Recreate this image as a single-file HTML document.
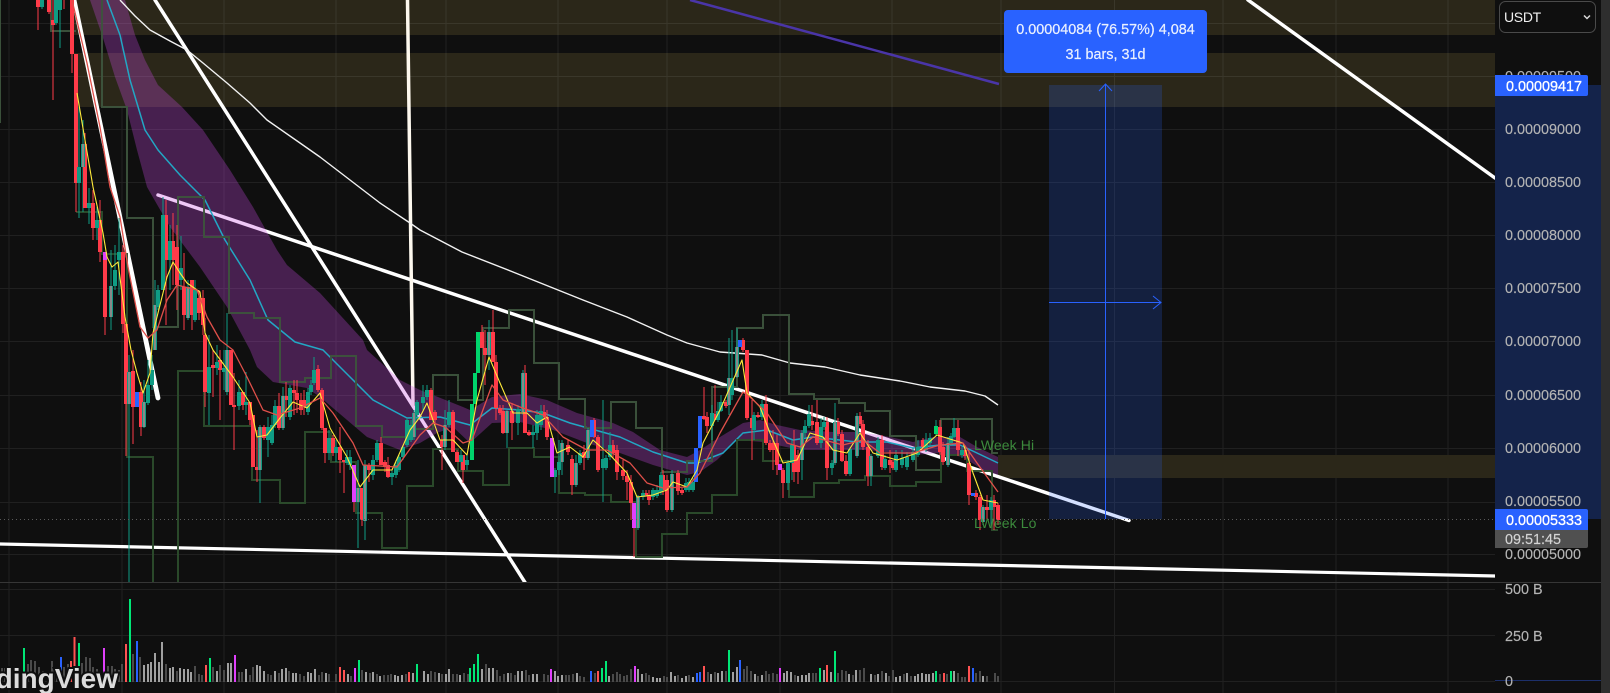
<!DOCTYPE html>
<html><head><meta charset="utf-8"><title>Chart</title>
<style>
html,body{margin:0;padding:0;background:#0f0f0f;width:1610px;height:693px;overflow:hidden}
svg{display:block;position:absolute;left:0;top:0}
text{font-family:"Liberation Sans",sans-serif}
</style></head><body>
<svg width="1610" height="693" viewBox="0 0 1610 693" xmlns="http://www.w3.org/2000/svg">
<rect width="1610" height="693" fill="#0f0f0f"/>
<rect x="1601" y="0" width="9" height="693" fill="#2e2e2e"/>
<defs><clipPath id="c"><rect x="0" y="0" width="1495" height="582"/></clipPath></defs>
<!-- grid -->
<path d="M9 0V693M122 0V693M224 0V693M336 0V693M446 0V693M558 0V693M667 0V693M780 0V693M892 0V693M1001 0V693M1114.500 0V693M1223 0V693M1336 0V693M1448 0V693" stroke="#202020" fill="none"/>
<path d="M0 23.500H1495M0 76.500H1495M0 129.500H1495M0 182.500H1495M0 235.500H1495M0 288.500H1495M0 341.500H1495M0 395.500H1495M0 448.500H1495M0 502.500H1495M0 554.500H1495M0 589.500H1495M0 635.500H1495M0 681.500H1495" stroke="#202020" fill="none"/>
<path d="M0 582.500H1601" stroke="#363636" fill="none"/>
<g clip-path="url(#c)">
<!-- zones -->
<rect x="74" y="0" width="1421" height="35" fill="#2b2719"/>
<rect x="74" y="53" width="1421" height="54" fill="#2b2719"/>
<rect x="998" y="455" width="497" height="23" fill="#2b2719"/>
<path d="M74 23.500H1495M74 76.500H1495M224 0V35M336 0V35M446 0V35M558 0V35M667 0V35M780 0V35M892 0V35M1001 0V35M1114.500 0V35M1223 0V35M1336 0V35M1448 0V35M224 53V107M336 53V107M446 53V107M558 53V107M667 53V107M780 53V107M892 53V107M1001 53V107M1114.500 53V107M1223 53V107M1336 53V107M1448 53V107" stroke="#3a372a" fill="none"/>
<!-- trend lines -->
<g stroke="#fff" fill="none" stroke-linecap="round">
<path d="M0 544L1495 576" stroke-width="3.200"/>
<path d="M158 195L1129 520.500" stroke-width="3.500"/>
<path d="M74 0L158 398" stroke-width="4.800"/>
<path d="M155 0L526 584" stroke-width="3.500"/>
<path d="M407.500 0L413 405" stroke-width="3.500" stroke="#fdf8ee"/>
<path d="M1248 0L1495 178" stroke-width="3.500"/>
</g>
<path d="M690 0L999 84" stroke="#4a35a8" stroke-width="2.500" fill="none"/>
<!-- purple band -->
<path fill="rgba(201,72,228,.3)" d="M90 0L125 0L135 35L145 60L158 85L182 107L203 130L230 170L253 207L277 250L287 265L320 293L363 340L367 350L400 380L420 390L433 395L463 407L470 410L492 397L520 394L547 400L577 413L613 423L633 432L660 450L687 457L700 450L720 437L743 423L760 420L777 425L800 430L833 432L857 432L880 435L913 442L933 437L960 437L977 447L998 457L998 475L983 470L963 457L940 453L913 455L867 450L800 450L763 442L737 440L717 460L700 472L687 475L653 465L620 453L587 443L553 430L520 422L492 423L470 443L453 427L437 433L420 443L400 450L367 437L320 397L307 388L273 382L257 367L250 350L227 307L200 267L170 227L147 187L137 150L127 110L115 77L103 38Z"/>
<!-- position rect -->
<rect x="1049" y="85" width="113" height="434" fill="rgba(41,98,255,.2)"/>
<path d="M1105.500 85V519M1049 302.500H1161M1099 91L1105.500 84L1112 91M1153 296L1161 302.500L1153 309" stroke="#2962ff" fill="none"/>
<!-- MAs -->
<path fill="none" stroke="#f2f2f2" stroke-width="1.400" stroke-linejoin="round" d="M120 0L135 16L150 30L170 41L187 50L203 63L227 83L250 103L267 120L300 143L320 157L350 180L380 203L410 223L420 230L462 252L513 272L583 300L627 317L667 335L687 343L720 352L762 355L790 363L825 367L860 375L900 381L930 387L965 391L985 396L998 405"/>
<path fill="none" stroke="#22a7c4" stroke-width="1.500" stroke-linejoin="round" d="M107 0L120 35L130 80L145 130L158 150L180 175L205 200L225 240L250 280L268 320L295 342L323 350L350 377L373 400L407 418L440 417L470 425L492 408L520 410L543 413L570 423L620 437L653 452L687 463L697 463L723 453L743 433L767 430L793 440L813 437L857 442L887 442L913 448L940 445L960 445L977 453L998 463"/>
<!-- stepped channels -->
<g fill="none" stroke="#2c4d2c" stroke-width="2" opacity=".95">
<path d="M0 0V123M51 0V31H76M102 0V107H127V218H153V327H178V197H204V237H229V313H254V318H280V382H305V378H331V356H356V426H382V437H407V429H433V375H458V400H483V328H509V310H534V363H559V399H585V428H611V402H636V428H662V472H687V461H712V387H737V328H763V315H789V394H814V399H839V403H865V411H890V436H916V470H941V419H992V453H998" stroke="#3d543d"/>
<path d="M76 212H102V254H127V457H153V582M178 582V371H204V426H252V480H280V503H305V432H331V462H356V513H382V548H407V486H433V449H458V471H483V485H509V448H534V457H559V493H585V495H611V502H636V557H662V534H687V513H712V495H737V440H763V461H789V497H814V483H839V480H865V476H890V486H916V482H941V455H967V471H992V530H998"/>
</g>
<!-- wicks -->
<path shape-rendering="crispEdges" fill="none" stroke="#ff3b49" d="M38 0V30M49 0V14M53 0V100M64 0V9M72 0V73M76 54V212M85 133V208M93 190V240M100 200V262M105 252V335M123 245V333M126 324V456M133 350V444M141 382V436M166 200V325M173 213V285M177 225V310M184 253V330M192 280V330M199 290V320M203 290V335M205 318V407M213 350V397M220 350V420M231 350V405M234 373V450M243 392V410M250 402V425M253 415V467M257 430V482M264 425V440M279 393V430M286 382V417M294 380V415M297 380V413M301 393V415M304 390V415M318 365V392M322 388V430M325 428V463M333 435V456M340 427V473M344 460V493M354 465V512M362 488V526M369 463V482M381 437V465M385 460V472M388 457V478M431 388V420M435 410V425M442 435V470M453 410V452M457 450V462M463 455V483M482 325V348M485 330V385M493 310V362M496 355V420M500 405V415M503 405V434M512 403V440M525 365V433M529 430V436M544 405V420M547 410V440M552 438V477M568 440V455M572 455V495M584 445V470M594 418V438M598 435V472M613 440V458M617 445V480M623 460V480M627 470V500M631 475V520M634 503V557M646 490V497M649 490V505M663 470V495M667 475V512M678 470V495M682 488V495M704 387V420M707 412V433M715 385V420M726 400V408M743 338V352M747 350V420M752 400V460M758 412V418M766 395V445M770 440V452M773 430V470M777 435V475M783 468V498M794 430V482M798 450V484M812 405V430M817 400V445M827 417V480M838 418V436M842 430V462M846 455V476M860 412V426M863 420V450M868 440V486M882 435V470M890 450V473M893 460V470M923 438V449M940 420V455M943 442V465M958 420V456M965 445V460M969 450V505M976 490V500M980 495V530M987 495V520M994 495V530M998 503V525"/>
<path shape-rendering="crispEdges" fill="none" stroke="#0f9c84" d="M42 0V9M56 0V25M60 0V48M79 107V218M83 120V212M89 188V224M97 207V240M111 250V330M115 245V290M119 218V295M129 355V582M144 380V428M148 360V405M152 355V390M155 280V350M158 285V310M163 197V290M170 225V290M181 236V290M188 280V320M195 280V322M209 335V425M217 345V375M224 350V390M227 313V395M239 380V410M246 372V415M260 425V503M268 417V457M272 415V445M275 400V428M283 387V430M290 385V420M308 388V415M311 380V395M314 357V385M329 430V460M336 440V462M347 450V465M350 450V470M358 460V548M365 460V540M373 455V480M377 440V462M392 470V485M396 460V478M399 455V472M403 445V460M407 418V447M411 420V442M414 410V440M417 400V420M423 385V410M427 385V400M445 410V450M449 400V427M461 450V470M467 455V470M489 320V370M507 410V448M518 405V435M523 370V415M533 425V448M537 410V440M541 405V430M555 468V493M559 440V475M562 440V475M576 455V487M580 450V465M588 428V460M603 400V502M606 455V470M610 432V460M638 495V530M643 490V500M653 488V500M657 485V498M661 472V495M672 470V512M686 478V492M689 478V492M693 478V492M712 405V440M718 402V422M721 395V412M729 338V415M732 330V400M737 328V378M754 412V440M762 400V420M788 460V490M792 440V480M802 430V480M805 420V437M809 405V428M821 418V448M824 417V430M832 460V475M835 403V465M850 447V476M857 413V458M871 454V486M878 437V458M885 455V470M896 450V472M902 450V468M907 452V470M913 448V462M918 440V457M926 433V452M930 433V445M936 420V436M948 437V467M951 433V445M954 418V438M962 447V458M983 505V525M991 497V528"/>
<!-- bodies -->
<g stroke-width="4" fill="none" shape-rendering="crispEdges">
<path id="rb" stroke="#ff3b49" d="M38 0V7M49 0V12M53 20V25M72 0V54M76 54V183M85 144V208M93 203V228M100 220V252M105 260V317M123 252V324M126 324V404M133 371V407M141 392V427M166 215V260M173 241V260M177 247V285M184 287V315M192 280V315M199 298V313M203 298V325M205 335V392M213 365V368M220 360V370M231 350V405M234 405V407M243 392V405M250 402V420M253 415V467M257 467V470M264 427V438M279 406V428M286 396V400M294 390V393M297 393V400M301 400V410M304 400V407M318 369V390M322 390V428M325 428V453M333 438V453M340 447V460M344 460V462M362 488V520M369 465V470M381 443V465M385 462V467M388 465V477M431 390V420M435 412V420M442 440V447M453 412V452M457 452V462M463 455V470M482 332V348M485 348V355M493 332V362M496 362V408M500 408V413M503 411V433M512 411V423M525 373V433M529 432V435M544 412V417M547 417V437M568 445V452M572 459V485M584 452V458M594 420V437M598 437V470M613 445V453M617 450V472M623 470V476M627 476V482M631 482V503M646 493V495M649 495V500M663 475V490M667 480V510M678 473V491M682 490V493M704 416V419M707 417V426M715 414V420M726 402V406M743 340V350M747 350V418M752 418V428M758 415V417M766 404V443M770 443V450M773 443V450M777 443V465M783 470V483M794 445V472M798 455V472M812 421V425M817 422V443M827 422V468M838 422V434M842 434V461M846 461V474M860 416V424M863 424V447M868 447V476M882 440V467M890 460V465M893 462V468M923 440V447M940 427V452M943 447V462M958 428V450M965 450V456M969 463V495M976 493V497M980 497V520M987 507V510M994 500V507M998 505V520"/>
<path id="tb" stroke="#0f9c84" d="M42 0V7M56 0V23M60 0V10M79 167V183M83 144V167M89 203V208M97 220V228M111 286V317M115 270V286M119 252V260M129 372V404M144 402V427M148 385V403M152 370V385M155 305V350M158 290V307M163 215V290M170 241V260M181 268V280M188 287V318M195 290V320M209 367V393M217 362V368M224 368V372M227 350V392M239 392V406M246 402V405M260 427V470M268 427V440M272 425V443M275 406V425M283 396V428M290 388V417M308 392V412M311 385V392M314 370V383M329 438V453M336 447V453M347 457V463M350 457V465M358 488V502M365 465V521M373 460V475M377 443V460M392 473V477M396 465V475M399 457V470M403 447V457M407 420V445M411 425V440M414 413V437M417 402V415M423 397V403M427 390V397M445 425V447M449 412V425M461 455V462M467 460V465M489 332V355M507 411V433M518 409V423M523 373V412M533 432V435M537 415V433M541 411V425M555 470V477M559 462V470M562 443V462M576 463V485M580 453V463M588 430V458M603 459V468M606 458V468M610 445V457M638 497V528M643 493V497M653 490V497M657 490V496M661 475V492M672 474V510M686 483V490M689 482V490M693 482V490M712 413V426M718 411V420M721 402V411M729 378V405M732 378V395M737 347V377M754 415V430M762 404V417M788 463V483M792 445V463M802 433V460M805 426V433M809 414V426M821 427V443M824 422V427M832 463V468M835 422V463M850 449V474M857 416V456M871 456V476M878 440V456M885 459V468M896 455V470M902 458V465M907 457V467M913 452V460M918 447V455M926 440V450M930 438V443M948 443V465M951 436V443M954 428V437M962 450V455M983 507V522M991 500V510"/>
<path stroke="#00d46c" d="M472 404V460M475 373V404M478 332V373M936 426V434"/>
<path stroke="#2962ff" d="M137 392V407M592 420V437M696 448V482M700 416V448M740 340V347M973 493V496"/>
<path stroke="#e040fb" d="M105 252V260M354 465V502M552 438V477M634 503V528M780 464V470"/>
</g>
<path shape-rendering="crispEdges" fill="none" stroke="#888" stroke-width="2" d="M83 144V167M111 286V317M129 372V404M144 402V427M155 305V350M188 287V318M227 350V392M260 427V470M283 396V428M358 488V502M365 465V521M414 413V437M445 425V447M489 332V355M507 411V433M523 373V412M562 443V462M576 463V485M588 430V458M638 497V528M672 474V510M729 378V405M737 347V377M802 433V460M835 422V463M857 416V456M871 456V476M948 443V465M983 507V522"/>
<!-- EMAs -->
<path fill="none" stroke="#ffeb3b" stroke-width="1.100" stroke-linejoin="round" d="M77 93L85 140L93 187L103 233L107 257L112 267L118 262L125 317L131 350L137 373L143 393L150 373L153 333L167 277L173 262L180 273L187 283L200 292L205 333L213 350L233 377L250 403L257 437L267 435L280 418L293 402L307 408L320 393L330 428L347 457L360 487L373 470L392 470L410 430L420 417L427 403L440 440L453 440L467 455L477 400L489 357L500 383L513 413L527 413L537 423L547 417L557 453L570 447L583 457L593 440L610 455L627 473L637 497L653 495L667 490L673 482L687 487L697 470L703 443L720 410L742 360L747 393L760 407L770 433L783 463L797 460L810 433L823 437L833 450L847 453L860 433L873 453L897 460L917 453L937 435L953 440L963 443L973 473L983 500L998 503"/>
<path fill="none" stroke="#e0504a" stroke-width="1.300" stroke-linejoin="round" d="M72 0L87 63L100 127L110 187L120 217L128 267L140 327L148 338L157 330L167 300L177 285L197 290L207 317L220 340L233 350L247 377L263 410L277 415L300 408L320 398L333 413L353 443L363 465L397 467L420 435L433 423L445 427L463 443L472 440L492 385L503 400L520 407L543 415L563 437L587 450L607 450L630 463L647 483L663 488L687 487L700 473L720 433L743 392L750 397L767 413L787 443L800 447L813 437L843 445L863 440L880 453L913 453L940 445L963 443L977 463L998 492"/>
<path d="M0 519.500H1495" stroke="#5a5a5a" stroke-dasharray="1 3" fill="none"/>
</g>
<!-- Labels on chart -->
<text x="974" y="450" font-size="14" letter-spacing=".1" fill="#3c8a3c">LWeek Hi</text>
<text x="974" y="528" font-size="14" letter-spacing=".1" fill="#3c8a3c">LWeek Lo</text>
<!-- volume -->
<g fill="none" stroke-width="2" shape-rendering="crispEdges">
<path stroke="#4a4a4a" d="M2 668V682M5 668V682M9 668V682M13 670V682M28 664V682M31 660V682M35 661V682M39 667V682M43 671V682M52 661V682M54 668V682M57 670V682M64 667V682M68 664V682M82 663V682M86 657V682M90 658V682M93 667V682M97 669V682M108 666V682M112 666V682M115 669V682M119 670V682M122 664V682M133 654V682M140 657V682M166 664V682M177 671V682M195 666V682M199 674V682M202 675V682M213 667V682M220 665V682M224 670V682M239 672V682M242 672V682M250 675V682M253 667V682M268 674V682M271 675V682M279 673V682M289 671V682M300 674V682M304 676V682M319 675V682M322 672V682M329 674V682M336 674V682M351 676V682M362 670V682M370 673V682M377 674V682M384 675V682M388 675V682M391 674V682M406 674V682M431 671V682M435 672V682M442 674V682M453 674V682M457 674V682M464 673V682M468 674V682M486 664V682M497 670V682M500 676V682M504 674V682M511 673V682M515 675V682M526 670V682M529 675V682M544 674V682M548 675V682M566 675V682M569 675V682M573 674V682M580 676V682M584 677V682M595 673V682M613 674V682M617 672V682M620 674V682M624 676V682M627 675V682M631 669V682M646 673V682M649 675V682M664 676V682M667 677V682M678 675V682M689 675V682M708 672V682M715 672V682M726 671V682M744 669V682M747 666V682M751 671V682M758 676V682M766 671V682M769 674V682M773 673V682M777 674V682M795 675V682M813 673V682M816 673V682M838 673V682M842 670V682M846 671V682M853 675V682M860 670V682M864 668V682M875 675V682M882 671V682M889 676V682M893 670V682M904 674V682M911 676V682M940 674V682M947 674V682M958 673V682M962 677V682M965 677V682M976 673V682M980 671V682M987 676V682M995 673V682M998 676V682"/>
<path stroke="#a0a0a0" d="M144 665V682M148 664V682M151 662V682M155 653V682M159 662V682M162 642V682M170 668V682M173 667V682M180 668V682M184 669V682M188 669V682M191 672V682M217 671V682M228 663V682M231 663V682M246 669V682M257 665V682M260 666V682M264 671V682M275 671V682M282 669V682M286 668V682M293 673V682M296 673V682M308 672V682M311 673V682M315 669V682M326 673V682M348 674V682M366 672V682M373 672V682M380 676V682M395 675V682M398 676V682M402 675V682M413 673V682M424 671V682M428 674V682M439 673V682M446 674V682M449 669V682M460 675V682M482 669V682M489 668V682M493 668V682M508 673V682M518 671V682M522 671V682M533 674V682M537 674V682M555 671V682M558 676V682M562 675V682M577 673V682M609 676V682M638 669V682M642 674V682M653 677V682M657 678V682M660 678V682M671 672V682M675 676V682M682 678V682M686 676V682M693 677V682M711 674V682M718 673V682M722 671V682M733 672V682M737 667V682M755 674V682M762 675V682M784 673V682M787 671V682M791 672V682M798 676V682M802 675V682M806 675V682M809 673V682M824 670V682M831 672V682M849 674V682M856 670V682M871 674V682M878 674V682M886 673V682M896 677V682M900 676V682M907 673V682M915 676V682M918 674V682M922 673V682M926 674V682M929 674V682M933 673V682M954 671V682M973 673V682M983 676V682"/>
<path stroke="#00e676" d="M24 648V682M79 643V682M130 599V682M210 658V682M359 660V682M417 664V682M470 668V682M474 664V682M478 654V682M602 668V682M606 661V682M729 650V682M820 668V682M835 651V682M936 671V682M951 671V682"/>
<path stroke="#ff5252" d="M71 661V682M74.500 637V682M126 644V682M206 665V682M340 667V682M344 670V682M409 672V682M598 671V682M704 666V682M827 665V682M944 673V682M969 666V682"/>
<path stroke="#2962ff" d="M61 657V682M137 641V682M591 671V682M697 673V682M700 672V682M740 660V682M973 668V682"/>
<path stroke="#e040fb" d="M104 648V682M235 655V682M355 668V682M551 669V682M635 666V682M780 668V682"/>
</g>
<!-- logo -->
<text x="118" y="688" text-anchor="end" font-size="28" font-weight="700" fill="#dcdcdc" stroke="#0f0f0f" stroke-width="4" paint-order="stroke">TradingView</text>
<!-- tooltip -->
<rect x="1004" y="10" width="203" height="63" rx="4" fill="#2962ff"/>
<text x="1105.500" y="34" text-anchor="middle" font-size="14.400" fill="#eaf0ff" stroke="#eaf0ff" stroke-width=".2">0.00004084 (76.57%) 4,084</text>
<text x="1105.500" y="59" text-anchor="middle" font-size="14.400" fill="#eaf0ff" stroke="#eaf0ff" stroke-width=".2">31 bars, 31d</text>
<!-- axis -->
<rect x="1495" y="85" width="106" height="434" fill="#14234a"/>
<path d="M1495 680.500H1601" stroke="#1c2f6a" fill="none"/>
<g font-size="14.400" fill="#b4b4b4" stroke="#b4b4b4" stroke-width=".15">
<text x="1505" y="81">0.00009500</text>
<text x="1505" y="134">0.00009000</text>
<text x="1505" y="187">0.00008500</text>
<text x="1505" y="240">0.00008000</text>
<text x="1505" y="293">0.00007500</text>
<text x="1505" y="346">0.00007000</text>
<text x="1505" y="400">0.00006500</text>
<text x="1505" y="453">0.00006000</text>
<text x="1505" y="506">0.00005500</text>
<text x="1505" y="559">0.00005000</text>
<text x="1505" y="594">500 B</text>
<text x="1505" y="641">250 B</text>
<text x="1505" y="686">0</text>
</g>
<path d="M1495 75H1586a2 2 0 0 1 2 2V94a2 2 0 0 1 -2 2H1495Z" fill="#2962ff"/>
<text x="1506" y="91" font-size="14.400" fill="#fff" stroke="#fff" stroke-width=".3">0.00009417</text>
<path d="M1495 530H1588V546a2 2 0 0 1 -2 2H1495Z" fill="#505050"/>
<path d="M1495 509H1586a2 2 0 0 1 2 2V530H1495Z" fill="#2962ff"/>
<text x="1506" y="525" font-size="14.400" fill="#fff" stroke="#fff" stroke-width=".3">0.00005333</text>
<text x="1505" y="544" font-size="14.400" fill="#d4d4d4" stroke="#d4d4d4" stroke-width=".15">09:51:45</text>
<!-- dropdown -->
<rect x="1499.500" y="1.500" width="96" height="31" rx="6" fill="#0f0f0f" stroke="#4a4a4a"/>
<text x="1504" y="22" font-size="14" letter-spacing="-.3" fill="#f0f0f0">USDT</text>
<path d="M1584 15.500L1587 18.500L1590 15.500" stroke="#d8d8d8" stroke-width="1.500" fill="none"/>
</svg>
</body></html>
